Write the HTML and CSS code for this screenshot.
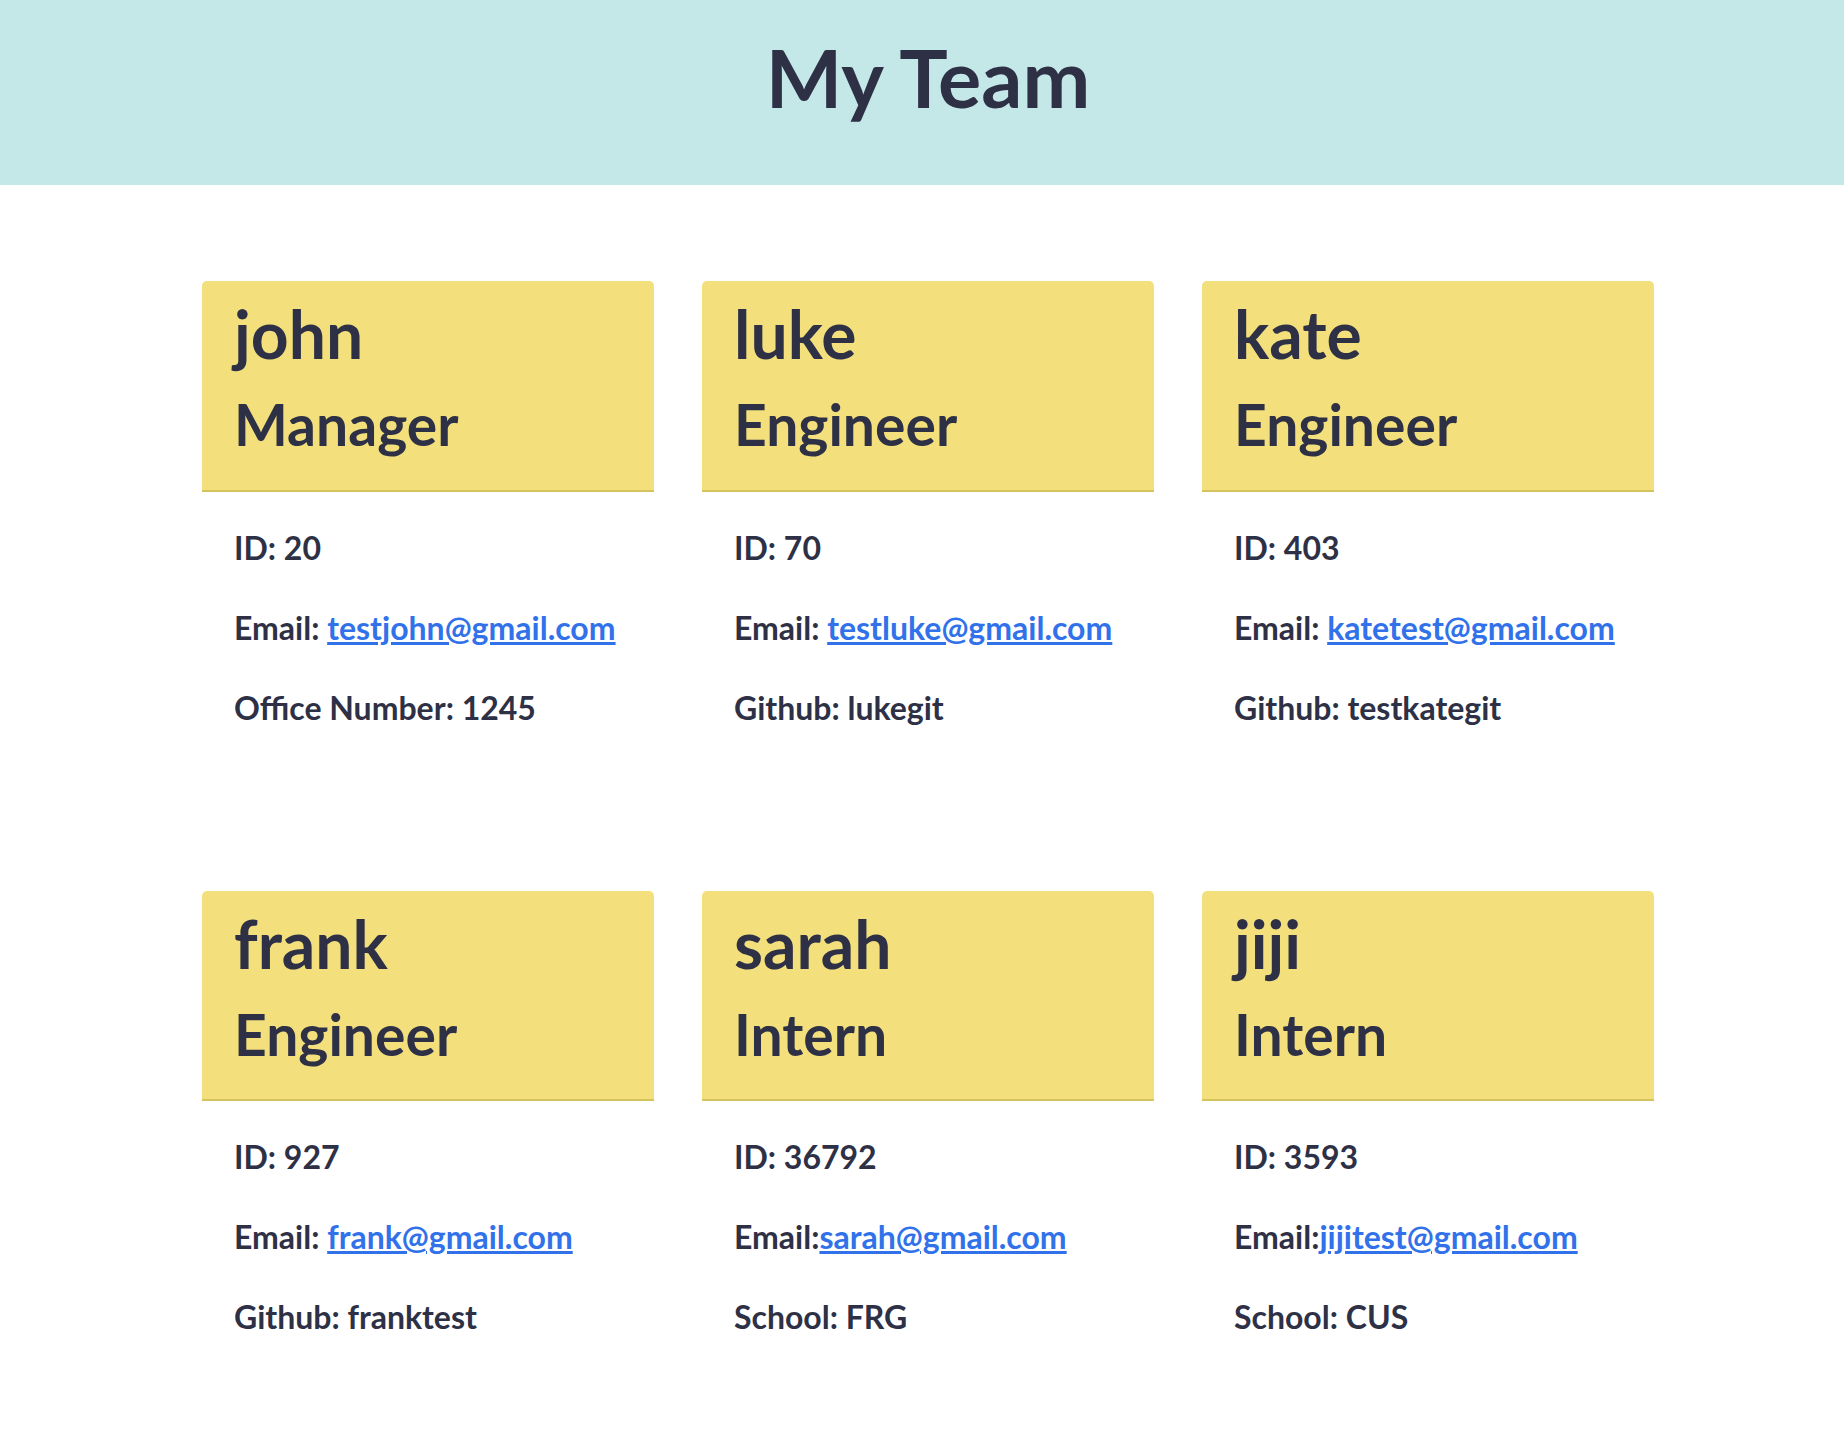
FILE: index.html
```html
<!DOCTYPE html>
<html lang="en">
<head>
<meta charset="utf-8">
<title>My Team</title>
<link rel="stylesheet" href="styles.css">
</head>
<body>
<header class="top">
  <h1 class="title">My Team</h1>
</header>
<main class="team">
  <section class="card">
    <div class="card-head">
      <h2 class="name">john</h2>
      <h3 class="role">Manager</h3>
    </div>
    <div class="card-body">
      <p>ID: 20</p>
      <p>Email: <a href="mailto:testjohn@gmail.com">testjohn@gmail.com</a></p>
      <p>Office Number: 1245</p>
    </div>
  </section>
  <section class="card">
    <div class="card-head">
      <h2 class="name">luke</h2>
      <h3 class="role">Engineer</h3>
    </div>
    <div class="card-body">
      <p>ID: 70</p>
      <p>Email: <a href="mailto:testluke@gmail.com">testluke@gmail.com</a></p>
      <p>Github: lukegit</p>
    </div>
  </section>
  <section class="card">
    <div class="card-head">
      <h2 class="name">kate</h2>
      <h3 class="role">Engineer</h3>
    </div>
    <div class="card-body">
      <p>ID: 403</p>
      <p>Email: <a href="mailto:katetest@gmail.com">katetest@gmail.com</a></p>
      <p>Github: testkategit</p>
    </div>
  </section>
  <section class="card">
    <div class="card-head">
      <h2 class="name">frank</h2>
      <h3 class="role">Engineer</h3>
    </div>
    <div class="card-body">
      <p>ID: 927</p>
      <p>Email: <a href="mailto:frank@gmail.com">frank@gmail.com</a></p>
      <p>Github: franktest</p>
    </div>
  </section>
  <section class="card">
    <div class="card-head">
      <h2 class="name">sarah</h2>
      <h3 class="role">Intern</h3>
    </div>
    <div class="card-body">
      <p>ID: 36792</p>
      <p>Email:<a href="mailto:sarah@gmail.com">sarah@gmail.com</a></p>
      <p>School: FRG</p>
    </div>
  </section>
  <section class="card">
    <div class="card-head">
      <h2 class="name">jiji</h2>
      <h3 class="role">Intern</h3>
    </div>
    <div class="card-body">
      <p>ID: 3593</p>
      <p>Email:<a href="mailto:jijitest@gmail.com">jijitest@gmail.com</a></p>
      <p>School: CUS</p>
    </div>
  </section>
</main>
</body>
</html>
```
FILE: styles.css
```css
html, body {
  margin: 0;
  padding: 0;
}

body {
  background: #ffffff;
  color: #2e3146;
  font-family: "Lato", "Liberation Sans", sans-serif;
}

.top {
  background: #c4e7e7;
  height: 185px;
  box-sizing: border-box;
  padding: 28px 0 0 12px;
  text-align: center;
}

.title {
  margin: 0;
  font-size: 81px;
  line-height: 1.2;
  font-weight: 700;
}

.team {
  display: grid;
  grid-template-columns: repeat(3, 452px);
  column-gap: 48px;
  row-gap: 127px;
  padding: 96px 0 60px 202px;
}

.card {
  background: #ffffff;
  border-radius: 5px;
}

.card-head {
  background: #f3e07c;
  border-radius: 5px 5px 0 0;
  border-bottom: 2px solid #d7c35c;
  padding: 13px 32px 31px;
}

.name {
  margin: 0 0 17px;
  font-size: 66px;
  line-height: 1.2;
  font-weight: 700;
}

.role {
  margin: 0;
  font-size: 57px;
  line-height: 1.2;
  font-weight: 700;
}

.card-body {
  display: flex;
  flex-direction: column;
  gap: 32px;
  padding: 32px 32px 32px;
}

.card-body p {
  margin: 0;
  font-size: 32px;
  line-height: 48px;
  font-weight: 700;
}

.card-body a {
  color: #3172ea;
  text-decoration: underline;
}
```
